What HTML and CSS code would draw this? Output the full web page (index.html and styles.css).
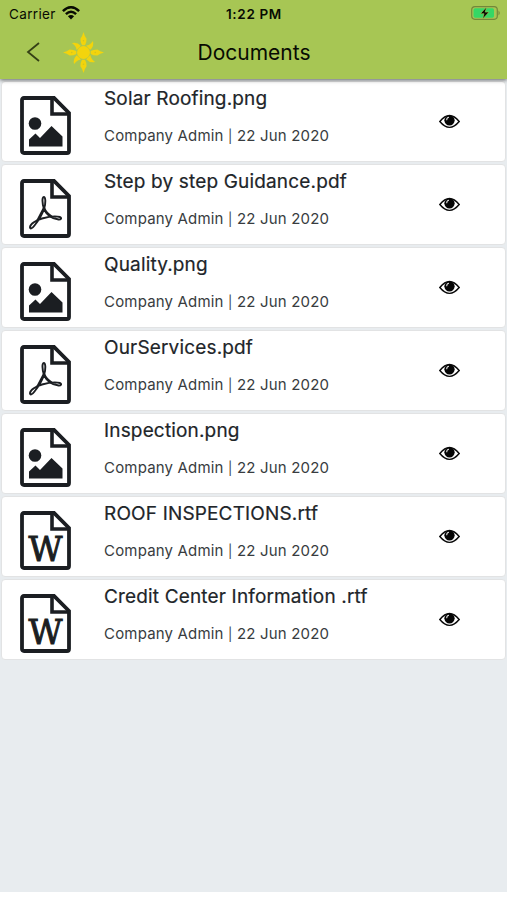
FILE: index.html
```
<!DOCTYPE html>
<html lang="en">
<head>
<meta charset="utf-8">
<title>Documents</title>
<link rel="stylesheet" href="styles.css">
</head>
<body>
<svg class="defs" width="0" height="0">
  <defs>
    <g id="page">
      <path d="M4 2H34L49 17V55Q49 57 47 57H4Q2 57 2 55V4Q2 2 4 2Z" fill="none" stroke="#1b1e22" stroke-width="3.8"/>
      <path d="M32 2V18H49" fill="none" stroke="#1b1e22" stroke-width="3.6"/>
    </g>
    <symbol id="image" viewBox="0 0 51 59">
      <use href="#page"/>
      <circle cx="15" cy="27.500" r="6.300" fill="#1b1e22"/>
      <path d="M9 50.500V43.500L15.500 37.500L20 42L31.500 30L42.500 40.500V50.500Z" fill="#1b1e22"/>
    </symbol>
    <symbol id="pdf" viewBox="0 0 51 59">
      <use href="#page"/>
      <g fill="none" stroke="#1b1e22" stroke-width="1.900" stroke-linejoin="round">
        <path d="M24 30C22 24 22 18 23.800 18S26 24 24 30C22 36 18.500 41.500 14.500 46.500C12 50 9.800 50.200 10 48C10.300 45 16 41.300 22 39.500C29 37.500 36 36.900 40 38C42.200 39 41 40.700 38.500 40.500C32.500 40 26 35.500 24 30"/>
        <path d="M24 29L17.500 41.500M24 29Q26 34.500 32 38" stroke-width="2.400"/>
      </g>
    </symbol>
    <symbol id="word" viewBox="0 0 51 59">
      <use href="#page"/>
      <text class="word-letter" x="25.500" y="50.300" text-anchor="middle" textLength="34" lengthAdjust="spacingAndGlyphs">W</text>
    </symbol>
    <symbol id="eye" viewBox="0 0 20 14">
      <path d="M.8 7Q10-4.500 19.200 7Q10 18.200 .8 7Z" fill="#fff" stroke="#0a0a0a" stroke-width="1.400"/>
      <circle cx="10" cy="5.900" r="4.900" fill="#050505"/>
      <path d="M7.300 5.800Q7.300 3.300 9.500 3" fill="none" stroke="#ddd" stroke-width="1"/>
    </symbol>
  </defs>
</svg>
<header class="header">
  <div class="status">
    <div class="carrier">
      <span>Carrier</span>
      <svg class="wifi" viewBox="0 0 18 14"><g fill="none" stroke="#080b02" stroke-width="2.500"><path d="M.9 5.200Q9-2.600 17.100 5.200"/><path d="M3.900 8.200Q9 3.400 14.100 8.200"/></g><path d="M5.900 10.300Q9 7.600 12.100 10.300L9 13.600Z" fill="#080b02"/></svg>
    </div>
    <div class="time">1:22 PM</div>
    <svg class="battery" viewBox="0 0 30 14"><rect x=".7" y=".7" width="25.600" height="12.600" rx="3.200" fill="none" stroke="#73873b" stroke-width="1.200"/><path d="M27.500 4.500Q30 7 27.500 9.500Z" fill="#73873b"/><rect x="2.500" y="2.300" width="20.500" height="9.400" rx="1.600" fill="#35d765"/><path d="M15.600 1L9.400 7.700H13L11.600 13L18 6.100H14.200Z" fill="#080b02" stroke="#a7c654" stroke-width=".6"/></svg>
  </div>
  <div class="nav">
    <svg class="back" viewBox="0 0 14 20"><path d="M13 1L2 10L13 19" fill="none" stroke="#354016" stroke-width="1.800"/></svg>
    <svg class="sun" viewBox="-20 -20 40 40">
      <defs>
        <path id="ray" d="M0-20Q1-16 3-13.500Q3-9.500 1.500-7H-1.500Q-3-9.500-3-13.500Q-1-16 0-20Z"/>
        <path id="flame" d="M-1.500-14.500Q3-12 2.800-6.500H-3Q-.5-10-1.500-14.500Z"/>
      </defs>
      <g fill="#f3d40c">
        <circle r="6.300"/>
        <use href="#ray"/><use href="#ray" transform="rotate(90)"/><use href="#ray" transform="rotate(180)"/><use href="#ray" transform="rotate(270)"/>
        <use href="#flame" transform="rotate(45)"/><use href="#flame" transform="rotate(135)"/><use href="#flame" transform="rotate(225)"/><use href="#flame" transform="rotate(315)"/>
      </g>
      <g fill="#d3c51f"><circle cy="-11.500" r=".8"/><circle cy="11.500" r=".8"/><circle cx="-11.500" r=".8"/><circle cx="11.500" r=".8"/></g>
    </svg>
    <h1 class="title">Documents</h1>
  </div>
</header>
<main class="list">
  <article class="card"><svg class="file"><use href="#image"/></svg><div class="info"><h2 class="name">Solar Roofing.png</h2><p class="meta">Company Admin <span class="bar">|</span> 22 Jun 2020</p></div><svg class="eye"><use href="#eye"/></svg></article>
  <article class="card"><svg class="file"><use href="#pdf"/></svg><div class="info"><h2 class="name">Step by step Guidance.pdf</h2><p class="meta">Company Admin <span class="bar">|</span> 22 Jun 2020</p></div><svg class="eye"><use href="#eye"/></svg></article>
  <article class="card"><svg class="file"><use href="#image"/></svg><div class="info"><h2 class="name">Quality.png</h2><p class="meta">Company Admin <span class="bar">|</span> 22 Jun 2020</p></div><svg class="eye"><use href="#eye"/></svg></article>
  <article class="card"><svg class="file"><use href="#pdf"/></svg><div class="info"><h2 class="name">OurServices.pdf</h2><p class="meta">Company Admin <span class="bar">|</span> 22 Jun 2020</p></div><svg class="eye"><use href="#eye"/></svg></article>
  <article class="card"><svg class="file"><use href="#image"/></svg><div class="info"><h2 class="name">Inspection.png</h2><p class="meta">Company Admin <span class="bar">|</span> 22 Jun 2020</p></div><svg class="eye"><use href="#eye"/></svg></article>
  <article class="card"><svg class="file"><use href="#word"/></svg><div class="info"><h2 class="name">ROOF INSPECTIONS.rtf</h2><p class="meta">Company Admin <span class="bar">|</span> 22 Jun 2020</p></div><svg class="eye"><use href="#eye"/></svg></article>
  <article class="card"><svg class="file"><use href="#word"/></svg><div class="info"><h2 class="name">Credit Center Information .rtf</h2><p class="meta">Company Admin <span class="bar">|</span> 22 Jun 2020</p></div><svg class="eye"><use href="#eye"/></svg></article>
</main>
</body>
</html>
```
FILE: styles.css
```
* { box-sizing: border-box; }
body { margin: 0; height: 900px; overflow: hidden; background: #fff; font-family: Inter, "Liberation Sans", sans-serif; color: #212529; display: flex; flex-direction: column; }
h1, h2, p { margin: 0; font-weight: 400; white-space: nowrap; }
svg { display: block; flex: none; }
.defs { position: absolute; }
.header { position: relative; flex: none; height: 79px; background: #a7c654; color: #080b02; box-shadow: 0 1px 4px rgba(0, 0, 0, .6); }
.status { height: 28px; display: grid; grid-template-columns: 1fr auto 1fr; align-items: center; padding: 0 6px 0 7px; font-size: 13.500px; }
.carrier { display: flex; align-items: center; gap: 6px; letter-spacing: .35px; padding-left: 2px; }
.wifi { width: 18px; height: 14px; margin-top: -2px; }
.time { font-weight: 600; font-size: 13.500px; letter-spacing: .65px; }
.battery { width: 30px; height: 14px; justify-self: end; margin-top: -2px; }
.nav { height: 49px; display: grid; grid-template-columns: 37px 50px 1fr 113px; padding-left: 26px; align-items: center; }
.back { width: 14px; height: 20px; margin-top: -1px; }
.sun { width: 41px; height: 41px; }
.title { font-size: 21px; line-height: 26px; text-align: center; margin-left: 1px; }
.list { height: 813px; flex: none; padding: 2px 1px 0; background: #e8ecef; display: flex; flex-direction: column; gap: 2px; }
.card { flex: none; height: 81px; background: #fff; border: 1px solid #e2e3e4; border-radius: 4px; display: flex; align-items: flex-start; padding-left: 18px; }
.file { width: 51px; height: 59px; margin-top: 14px; }
.info { width: 335px; margin-left: 33px; padding-top: 4px; }
.name { font-size: 19px; line-height: 26px; letter-spacing: .16px; -webkit-text-stroke: .2px #212529; }
.meta { font-size: 15px; line-height: 20px; margin-top: 14px; letter-spacing: .18px; color: #383c40; }
.bar { font-size: 13px; }
.eye { width: 21px; height: 15px; margin-top: 32px; }
.word-letter { font: 34px "DejaVu Serif", serif; fill: #1b1e22; stroke: #1b1e22; stroke-width: 1; }
```
